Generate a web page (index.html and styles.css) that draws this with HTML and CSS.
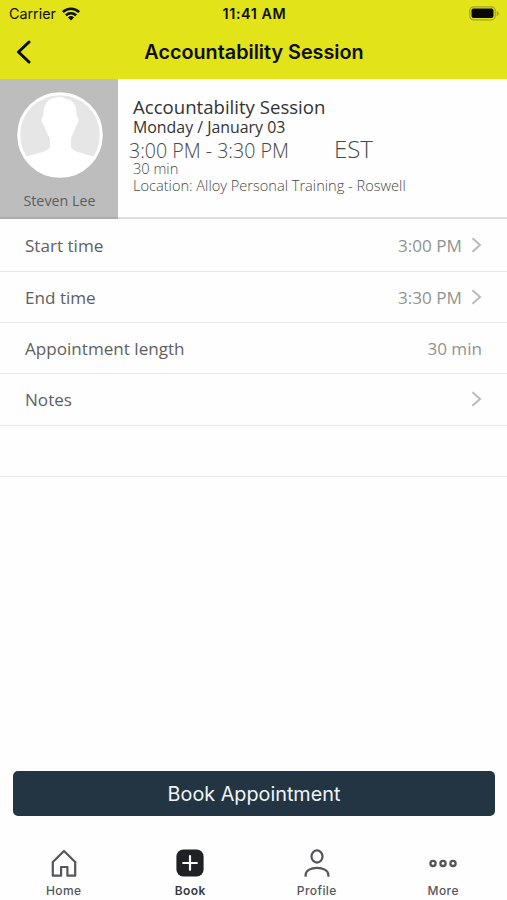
FILE: index.html
```html
<!DOCTYPE html>
<html lang="en">
<head>
<meta charset="utf-8">
<title>Accountability Session</title>
<link rel="stylesheet" href="styles.css">
</head>
<body>
<div class="app">
  <header class="header">
    <div class="status">
      <div class="carrier"><span>Carrier</span>
        <svg class="wifi" width="18" height="14" viewBox="0 0 18 14"><g fill="none" stroke="#0d0e04" stroke-width="2.5"><path d="M.9 5.1a11.5 11.5 0 0 1 16.2 0"/><path d="M3.9 8.3a7.2 7.2 0 0 1 10.2 0"/></g><path d="M9 13.4 6 10.5a4.3 4.3 0 0 1 6 0z" fill="#0d0e04"/></svg>
      </div>
      <span class="clock">11:41 AM</span>
      <svg class="battery" width="31" height="15" viewBox="0 0 31 15"><rect x=".8" y=".8" width="25.4" height="13" rx="3.8" fill="none" stroke="#a5a51b" stroke-width="1.2"/><rect x="2.5" y="2.5" width="22" height="9.6" rx="2" fill="#080902"/><path d="M27.7 5v5c2.8-1 2.8-4 0-5z" fill="#a5a51b"/></svg>
    </div>
    <div class="nav">
      <svg class="back" width="16" height="24" viewBox="0 0 16 24"><path d="M13 2 2.5 12 13 22" fill="none" stroke="#0d0e04" stroke-width="3" stroke-linecap="round" stroke-linejoin="round"/></svg>
      <h1 class="title">Accountability Session</h1>
    </div>
  </header>
  <section class="card">
    <div class="trainer">
      <svg width="86" height="86" viewBox="0 0 86 86"><circle cx="43" cy="43" r="41" fill="#e6e6e6"/><path d="M8 65C20 61 33 60 33 54V47C31 43 28 38 27 33C24 32 24 25 26.500 24C26 12 31 5 43 5Q47 5 49 7C57 8 60 14 59.500 24C62 25 62 32 59.500 33C58 38 55 43 54 47V54C54 60 66 61 78 65C69 80 57 85 43 85S17 80 8 65z" fill="#fff"/><circle cx="43" cy="43" r="41.3" fill="none" stroke="#fff" stroke-width="3"/></svg>
      <span class="name">Steven Lee</span>
    </div>
    <div class="info">
      <div class="service">Accountability Session</div>
      <div class="date">Monday / January 03</div>
      <div class="times"><span class="range">3:00 PM - 3:30 PM</span><span class="zone">EST</span></div>
      <div class="length">30 min</div>
      <div class="location">Location: Alloy Personal Training - Roswell</div>
    </div>
  </section>
  <main class="rows">
    <div class="row"><span class="label">Start time</span><span class="value">3:00 PM</span><svg class="chev" width="11" height="16" viewBox="0 0 11 16"><path d="M1.5 1.3 9 8l-7.500 6.700"/></svg></div>
    <div class="row"><span class="label">End time</span><span class="value">3:30 PM</span><svg class="chev" width="11" height="16" viewBox="0 0 11 16"><path d="M1.5 1.3 9 8l-7.500 6.700"/></svg></div>
    <div class="row"><span class="label">Appointment length</span><span class="value">30 min</span></div>
    <div class="row"><span class="label">Notes</span><svg class="chev" width="11" height="16" viewBox="0 0 11 16"><path d="M1.5 1.3 9 8l-7.500 6.700"/></svg></div>
    <div class="row"></div>
  </main>
  <button class="book">Book Appointment</button>
  <nav class="tabs">
    <div class="tab"><svg width="28" height="28" viewBox="0 0 28 28"><path d="M2.800 26.700V13L14 2l11.200 11v13.700h-7.800v-8.700h-6.300v8.700z" fill="none" stroke="#55565a" stroke-width="2.200" stroke-linejoin="round"/></svg><span>Home</span></div>
    <div class="tab active"><svg width="28" height="28" viewBox="0 0 28 28"><rect x=".4" y=".4" width="27.200" height="27.200" rx="7" fill="#202124"/><path d="M14 7.200v13.600M7.200 14h13.600" stroke="#fff" stroke-width="2.200" stroke-linecap="round"/></svg><span>Book</span></div>
    <div class="tab"><svg width="28" height="28" viewBox="0 0 28 28"><g fill="none" stroke="#55565a" stroke-width="2.200"><ellipse cx="14" cy="7.500" rx="5.500" ry="6.100"/><path d="M2.600 27.800v-1.800C2.600 16.500 25.400 16.500 25.400 26v1.800"/></g></svg><span>Profile</span></div>
    <div class="tab"><svg width="28" height="28" viewBox="0 0 28 28"><g fill="none" stroke="#55565a" stroke-width="2.300"><circle cx="4" cy="14.400" r="2.600"/><circle cx="14" cy="14.400" r="2.600"/><circle cx="24" cy="14.400" r="2.600"/></g></svg><span>More</span></div>
  </nav>
</div>
</body>
</html>
```

FILE: styles.css
```css
* { box-sizing: border-box; }
body { margin: 0; background: #fff; font-family: "Open Sans", sans-serif; }
.app { width: 507px; height: 900px; display: flex; flex-direction: column; overflow: hidden; background: #fefefe; white-space: nowrap; }
.header { height: 79px; flex: none; background: #e2e319; color: #0d0e04; font-family: Inter, sans-serif; }
.status { height: 27px; display: grid; grid-template-columns: 1fr auto 1fr; align-items: center; padding: 0 7px 0 9px; }
.carrier { display: flex; align-items: center; gap: 6px; font-size: 14.3px; }
.clock { font-size: 14.3px; font-weight: 600; letter-spacing: .6px; }
.battery { justify-self: end; }
.nav { height: 50px; display: grid; grid-template-columns: 36px 1fr 36px; align-items: center; padding: 0 15px 0 16px; }
.title { margin: 0; text-align: center; font-size: 19.8px; line-height: 26px; font-weight: 600; }
.card { height: 140px; flex: none; display: flex; border-bottom: 2px solid #dedede; }
.trainer { width: 118px; height: 140px; background: #bdbdbd; display: flex; flex-direction: column; align-items: center; padding: 13px 0 0 1px; border-bottom: 2px solid #acacac; }
.trainer svg { flex: none; }
.name { margin-top: 13px; font-size: 14.3px; line-height: 20px; color: #5c5c5c; }
.info { padding: 16px 0 0 15px; font-weight: 300; color: #484848; }
.service { font-size: 18.6px; line-height: 24px; color: #333; font-weight: 400; }
.date { font-size: 15.9px; line-height: 16px; color: #333; font-weight: 400; }
.times { display: flex; margin-left: -4px; height: 26px; align-items: center; }
.range { font-size: 19.6px; line-height: 26px; width: 205px; padding-top: 5px; }
.zone { font-size: 24px; line-height: 26px; padding-top: 1px; }
.length { font-size: 14.6px; line-height: 15px; }
.location { font-size: 14.6px; line-height: 18px; }
.rows { flex: none; }
.row { height: 51.400px; display: flex; align-items: center; padding: 1px 25px 0; border-bottom: 1px solid #e8e8e8; font-size: 17.1px; }
.row:first-child { height: 52.500px; padding-top: 2px; }
.label { color: #606060; margin-right: auto; }
.value { color: #929292; }
.chev { margin-left: 9px; margin-bottom: 1px; fill: none; stroke: #bababa; stroke-width: 2; }
.book { margin: auto 12px 0 13px; height: 45px; flex: none; border: 0; border-radius: 5px; background: #233543; color: #f1f6fa; font-family: Inter, sans-serif; font-size: 19.8px; padding-top: 1px; }
.tabs { height: 84px; flex: none; display: grid; grid-template-columns: repeat(4, 126.500px); padding: 33px 0 0 .5px; }
.tab { display: flex; flex-direction: column; align-items: center; gap: 6px; color: #55565a; font: 500 12px/16px Inter, sans-serif; letter-spacing: .4px; }
.tab svg { flex: none; }
.active { color: #38393c; font-weight: 600; }
```
